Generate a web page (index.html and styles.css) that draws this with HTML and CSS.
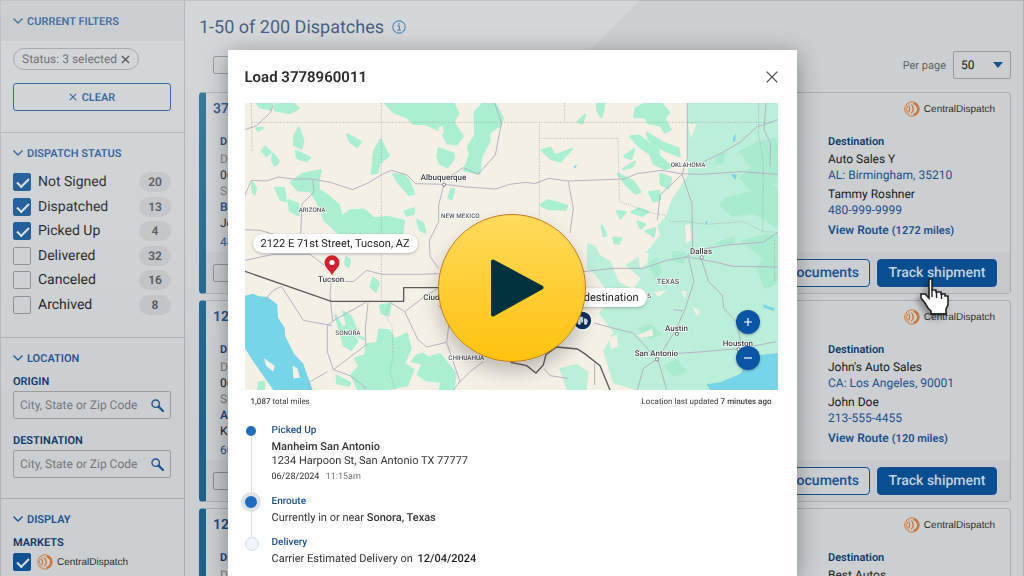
FILE: index.html
```
<!DOCTYPE html>
<html lang="en">
<head>
    <meta charset="utf-8">
    <title>Dispatches</title>
    <meta name="viewport" content="width=device-width, initial-scale=1.0">
    <link rel="stylesheet" href="styles.css">
</head>
<body>
    <svg class="defs" width="0" height="0" aria-hidden="true">
        <symbol id="chevron" viewBox="0 0 10 6"><path d="M0.5 0.6 5 5 9.5 0.6" fill="none" stroke="currentColor" stroke-width="1.4"/></symbol>
        <symbol id="cross" viewBox="0 0 10 10"><path d="M1 1 9 9M9 1 1 9" fill="none" stroke="currentColor" stroke-width="1.5"/></symbol>
        <symbol id="search" viewBox="0 0 13 13"><circle cx="4.7" cy="4.7" r="3.7" fill="none" stroke="currentColor" stroke-width="1.4"/><path d="M7.6 7.6 12 12" stroke="currentColor" stroke-width="2.2" stroke-linecap="round"/></symbol>
        <symbol id="cd-logo" viewBox="0 0 16 16">
            <g fill="none" stroke="#cd7230">
                <circle cx="8" cy="8" r="7.2" stroke-width="0.9"/>
                <path d="M5.6 3A5.6 5.6 0 0 0 5.6 13" stroke-width="0.8"/>
                <path d="M9.5 2.2A6 6 0 0 1 9.5 13.800" stroke-width="2"/>
                <path d="M4.600 5.200Q6.800 8 4.600 10.800" stroke-width="1.2"/>
                <path d="M7.300 3.600Q11.200 8 7.300 12.400" stroke-width="1.3"/>
            </g>
        </symbol>
    </svg>

    <div class="app">
        <aside class="sidebar">
            <h2 class="filter-title top"><svg><use href="#chevron"/></svg>CURRENT FILTERS</h2>
            <section class="section current">
                <button class="chip">Status: 3 selected<svg><use href="#cross"/></svg></button>
                <button class="clear-btn"><svg><use href="#cross"/></svg>CLEAR</button>
            </section>

            <section class="section">
                <h2 class="filter-title"><svg><use href="#chevron"/></svg>DISPATCH STATUS</h2>
                <ul class="status-list">
                    <li><label><input type="checkbox" checked>Not Signed</label><span class="count">20</span></li>
                    <li><label><input type="checkbox" checked>Dispatched</label><span class="count">13</span></li>
                    <li><label><input type="checkbox" checked>Picked Up</label><span class="count">4</span></li>
                    <li><label><input type="checkbox">Delivered</label><span class="count">32</span></li>
                    <li><label><input type="checkbox">Canceled</label><span class="count">16</span></li>
                    <li><label><input type="checkbox">Archived</label><span class="count">8</span></li>
                </ul>
            </section>

            <section class="section location">
                <h2 class="filter-title"><svg><use href="#chevron"/></svg>LOCATION</h2>
                <label class="field-label" for="origin">ORIGIN</label>
                <div class="search-box">
                    <input id="origin" type="text" placeholder="City, State or Zip Code">
                    <svg><use href="#search"/></svg>
                </div>
                <label class="field-label second" for="destination">DESTINATION</label>
                <div class="search-box">
                    <input id="destination" type="text" placeholder="City, State or Zip Code">
                    <svg><use href="#search"/></svg>
                </div>
            </section>

            <section class="section display">
                <h2 class="filter-title"><svg><use href="#chevron"/></svg>DISPLAY</h2>
                <h3 class="field-label">MARKETS</h3>
                <label class="market"><input type="checkbox" checked><span class="brand"><svg><use href="#cd-logo"/></svg>CentralDispatch</span></label>
            </section>
        </aside>

        <main class="main">
            <h1>1-50 of 200 Dispatches
                <svg class="info" viewBox="0 0 14 14"><circle cx="7" cy="7" r="6.2" fill="none" stroke="currentColor" stroke-width="1.2"/><path d="M5.4 6.2H7.4V10M5.2 10.1H9" fill="none" stroke="currentColor" stroke-width="1.2"/><circle cx="7" cy="3.9" r="0.9" fill="currentColor"/></svg>
            </h1>
            <div class="toolbar">
                <input type="checkbox" aria-label="Select all">
                <div class="per-page">
                    <label for="perPage">Per page</label>
                    <span class="select-wrap">
                        <select id="perPage"><option>50</option><option>100</option></select>
                        <svg viewBox="0 0 10 6"><path d="M0 0H10L5 6Z" fill="#17508f"/></svg>
                    </span>
                </div>
            </div>

            <article class="card">
                <div class="card-head">
                    <h2>3778960011</h2>
                    <span class="brand"><svg><use href="#cd-logo"/></svg>CentralDispatch</span>
                </div>
                <div class="card-body">
                    <div class="info-col">
                        <p class="heading">Disp</p>
                        <p class="muted gap-1">Date</p>
                        <p>06/28</p>
                        <p class="muted">Ship</p>
                        <p class="strong">Brok</p>
                        <p>Jo</p>
                        <p class="gap-3"><a href="#">480</a></p>
                    </div>
                    <div class="dest-col">
                        <p class="heading">Destination</p>
                        <p class="gap-1">Auto Sales Y</p>
                        <p><a href="#">AL: Birmingham, 35210</a></p>
                        <p class="gap-3">Tammy Roshner</p>
                        <p><a href="#">480-999-9999</a></p>
                        <p class="gap-4"><a class="route" href="#">View Route <small>(1272 miles)</small></a></p>
                    </div>
                </div>
                <div class="card-foot">
                    <input type="checkbox" aria-label="Select load">
                    <div class="actions">
                        <button class="btn">Documents</button>
                        <button class="btn primary">Track shipment</button>
                        <svg class="cursor" viewBox="0 0 29 39">
                            <path d="M9 2H12V13H16V15H21V17H25V19H28V28L26 32V37H11V34L8 31L5 26L1 21V17H5L9 21Z" fill="#fff" stroke="#222" stroke-width="1.6"/>
                            <path d="M12 13V20M16.500 15V21M21.500 17V22M10 37H27" stroke="#222" stroke-width="1.4"/>
                        </svg>
                    </div>
                </div>
            </article>

            <article class="card">
                <div class="card-head">
                    <h2>1234</h2>
                    <span class="brand"><svg><use href="#cd-logo"/></svg>CentralDispatch</span>
                </div>
                <div class="card-body">
                    <div class="info-col">
                        <p class="heading">Disp</p>
                        <p class="muted gap-1">Date</p>
                        <p>06/28</p>
                        <p class="muted">Ship</p>
                        <p class="strong">Auto</p>
                        <p>Kim</p>
                        <p class="gap-3"><a href="#">602</a></p>
                    </div>
                    <div class="dest-col">
                        <p class="heading">Destination</p>
                        <p class="gap-1">John's Auto Sales</p>
                        <p><a href="#">CA: Los Angeles, 90001</a></p>
                        <p class="gap-3">John Doe</p>
                        <p><a href="#">213-555-4455</a></p>
                        <p class="gap-4"><a class="route" href="#">View Route <small>(120 miles)</small></a></p>
                    </div>
                </div>
                <div class="card-foot">
                    <input type="checkbox" aria-label="Select load">
                    <div class="actions">
                        <button class="btn">Documents</button>
                        <button class="btn primary">Track shipment</button>
                    </div>
                </div>
            </article>

            <article class="card">
                <div class="card-head">
                    <h2>1234</h2>
                    <span class="brand"><svg><use href="#cd-logo"/></svg>CentralDispatch</span>
                </div>
                <div class="card-body">
                    <div class="info-col">
                        <p class="heading">Disp</p>
                        <p class="muted gap-1">Date</p>
                    </div>
                    <div class="dest-col">
                        <p class="heading">Destination</p>
                        <p class="gap-1">Best Autos</p>
                    </div>
                </div>
            </article>
        </main>
    </div>

    <div class="sheen"></div>

    <div class="overlay">
        <div class="modal" role="dialog" aria-labelledby="modalTitle">
            <header class="modal-head">
                <h2 id="modalTitle">Load 3778960011</h2>
                <button class="close-btn" aria-label="Close"><svg viewBox="0 0 12 12"><path d="M.7.7 11.3 11.3M11.3.7.7 11.3" stroke="#444" stroke-width="1.2"/></svg></button>
            </header>

            <div class="map">
                <svg class="map-img" viewBox="15 24 1599 861">
                    <rect x="15" y="24" width="1599" height="861" fill="#f5f0e6"/>

                    <!-- forests, west -->
                    <g class="forest">
                        <path d="M50 24H98L92 44 60 36ZM108 26H160L176 40 150 54 104 46Z"/>
                        <path d="M176 98 190 138 184 160 162 150 164 120ZM168 168 210 188 200 198 172 190ZM100 176 116 200 104 212 96 196ZM76 156 92 172 80 182 66 168ZM50 100 70 98 54 108ZM322 118 362 140 352 156 330 140Z"/>
                        <path d="M422 134 446 182 418 206 412 232 396 236 402 170Z"/>
                        <path d="M435 24H640L655 56 640 80 668 124 650 148 622 144 606 110 560 88 520 86 500 66 462 52Z"/>
                        <path d="M704 52 730 24H764L788 68 782 90 748 112 748 138 722 190 718 236 672 226 690 178 684 156 706 120Z"/>
                        <path d="M596 160 640 176 642 190 622 216 600 206 592 184Z"/>
                        <path d="M460 238 490 240 506 256 522 296 508 300 474 262Z"/>
                        <path d="M152 262 190 236 242 226 236 254 236 284 262 300 296 330 306 366 330 346 372 344 402 370 442 366 492 378 486 418H300L254 376 232 322 212 288 174 286Z"/>
                        <path d="M106 278 132 280 138 318 122 314ZM146 316 174 326 176 360 150 348ZM36 262 48 280 44 298 38 290ZM532 376 550 386 556 412 540 404ZM494 348 522 340 522 356 500 362ZM634 282 642 284 634 312 626 308Z"/>
                        <path d="M400 548 416 564 408 590 392 574ZM318 486 330 494 326 516 316 508ZM420 632 452 626 446 660 426 656Z"/>
                        <path d="M286 660 308 700 320 690 352 740 334 764 312 752ZM310 650 332 664 356 720 372 732 352 722 320 684Z"/>
                        <path d="M334 840 358 812 346 790 376 780 380 748 412 744 418 704 446 706 464 734 500 716 512 760 492 806 520 824 502 870 430 885H356Z"/>
                        <path d="M516 798 548 806 534 838 560 856 604 860 600 885H640L646 836 622 806 600 778 566 788 548 776 530 782Z"/>
                        <path d="M56 864 72 860 72 885H56ZM290 842 330 864 326 872 292 864Z"/>
                    </g>
                    <!-- plains and east -->
                    <g class="forest" transform="translate(795 0)">
                        <path d="M110 166 136 158 150 182 200 162 166 200 138 192ZM276 28 298 24 290 66 278 50ZM218 80 240 60 232 86Z"/>
                        <path d="M392 40 420 26H470L492 52 478 70 496 104 480 112 466 90 430 84 420 66 388 66Z"/>
                        <path d="M376 124 402 122 430 144 458 152 462 182 500 216 480 222 446 206 436 178 400 152ZM426 114 480 146 520 160 524 184 474 164 430 132ZM358 184 388 162 378 192ZM354 222 390 200 380 216Z"/>
                        <path d="M106 330 130 316 186 332 182 344 130 342ZM140 328 166 328 166 334 140 334ZM338 236 384 258 406 290 392 296 360 266ZM432 292 462 288 466 312 446 320ZM466 236 498 250 490 280 468 268ZM336 348 362 352 346 370ZM290 392 304 420 296 424ZM398 380 420 388 406 400ZM422 408 450 400 446 424ZM326 428 348 430 342 446 328 444ZM380 352 400 340 430 350 412 362Z"/>
                    </g>
                    <path fill="#bcefd9" d="M1342 24H1614V885H1188L1118 864 1106 822 1090 768 1120 712 1076 654 1112 616 1166 606 1202 550 1156 510 1220 470 1260 420 1252 392 1276 366 1296 312 1324 270 1344 240Z"/>
                    <path fill="#bcefd9" d="M1042 444 1066 452 1080 480 1112 498 1136 560 1170 578 1154 610 1106 596 1066 540 1040 520ZM958 820 1010 806 1046 830 1040 885H980Z"/>
                    <g class="woods">
                        <path d="M1500 170 1548 144 1614 130V260L1580 272 1614 280V398L1540 352 1478 362 1442 330 1460 310 1542 290 1500 250 1536 216ZM1430 190 1452 176 1446 202 1428 208Z"/>
                        <path d="M1508 440 1560 424 1614 420V560L1576 578 1552 520 1572 490ZM1300 470 1334 476 1330 502 1300 496ZM1430 446 1482 428 1480 446Z"/>
                        <path d="M1230 506 1250 490 1262 530 1246 546ZM1196 700 1230 690 1262 716 1230 728ZM1276 812 1310 796 1336 830 1300 842Z"/>
                    </g>
                    <g fill="#f5f0e6">
                        <path d="M1194 474 1226 474 1222 504 1200 520ZM1336 390 1350 388 1354 436 1338 446ZM1344 86 1370 86 1352 130ZM1324 586 1340 590 1334 612ZM1356 632 1382 650 1370 662ZM1242 592 1280 586 1256 606ZM1108 730 1130 718 1134 756 1112 762ZM1190 722 1236 702 1240 722 1204 728Z"/>
                        <path d="M594 98 608 92 612 112 602 124ZM660 304 678 296 676 320Z"/>
                    </g>

                    <!-- water -->
                    <g fill="#77d5ea">
                        <path d="M15 602 40 596 56 604 82 606 112 628 114 668 134 698 136 724 162 776 190 806 218 885H100L40 800 15 760Z"/>
                        <path d="M1400 868 1440 862 1500 838 1524 802 1560 780 1614 774V885H1410Z"/>
                        <path d="M1480 126 1488 116 1486 136 1478 144ZM1472 236 1490 240 1486 256ZM1394 384 1404 376 1400 388ZM1568 628 1604 640 1602 648 1572 638ZM1000 216 1012 208 1006 220Z"/>
                    </g>
                    <path fill="#f5f0e6" d="M72 790 104 812 100 830 78 812ZM158 812 172 820 180 848 160 850ZM15 808 50 860 42 885H15Z"/>

                    <!-- roads -->
                    <g fill="none" stroke="#b4b4c4" stroke-width="3" stroke-linejoin="round">
                        <path d="M15 300 34 256 80 258 114 246 160 252 216 252 270 262 338 284 384 264 430 236 454 226 502 240 526 266 612 268 680 276 768 282 808 268 858 262 884 266 926 250 982 258 1152 252 1190 236 1266 226 1322 236 1380 238 1504 230 1614 238"/>
                        <path d="M218 254 222 292 186 326 182 418M15 404 60 406 130 426M15 104 50 92 92 52 100 30M764 24 784 84 766 180 714 238 670 218 618 252M612 268 596 330 596 380 568 436 570 484 596 520M596 536 536 538 426 538 380 526 340 560 290 558M15 496 100 478 210 478 252 510"/>
                        <path d="M985 260 1000 340 990 414M1342 24 1342 190 1326 238 1260 300 1252 376M1326 238 1356 326 1358 470 1332 490M1380 206 1444 174 1500 142 1550 96 1614 74M1578 24 1572 104 1592 144 1590 216M1010 532 1120 520 1210 520 1280 496 1344 486 1420 500 1478 514 1614 516M1346 482 1380 464 1460 450 1568 442 1614 412"/>
                        <path d="M1384 492 1406 560 1446 600 1452 640 1490 682 1504 750M1346 490 1362 560 1336 640 1310 700 1254 790 1210 820 1192 885M1254 794 1280 885M1062 684 1130 702 1180 714 1240 780 1390 770 1504 760 1610 740M1300 644 1330 648"/>
                        <path d="M274 550 270 600 278 680 262 692 262 770 280 824 330 842 380 880M280 824 378 750 376 700 384 624M276 680 310 660 378 622M276 692 190 676 124 574 100 586 70 620M450 622 494 650 534 734 560 756 620 742 660 860 690 830 730 800M494 650 560 600 596 580M620 742 628 680 596 630M660 860 640 885M262 830 200 866M912 820 930 842 984 850"/>
                    </g>
                    <g fill="none" stroke="#9b9b98" stroke-width="2" stroke-dasharray="3 4">
                        <path d="M34 24 36 168M36 82H1600M424 24V618M974 24V82M898 86V372M904 130H1134L1138 320M1556 24V120L1570 200 1568 410 1614 412"/>
                        <path d="M1138 320 1180 334 1224 352 1272 360 1290 380 1330 378 1400 388 1510 380 1568 408M450 622 436 660 456 694 460 780 450 830 466 885M1604 435V560"/>
                    </g>
                    <path fill="none" stroke="#5c5a5a" stroke-width="4" d="M15 529 274 619H491V578H596M812 802 860 812 888 834 910 810 918 778 950 756 1012 762 1034 776 1080 812 1110 885"/>
                    <path fill="none" stroke="#b0b0b0" stroke-width="3" d="M1064 805V870"/>

                    <g class="city-dots">
                        <circle cx="612" cy="269" r="5"/>
                        <circle cx="1385" cy="487" r="5"/>
                        <circle cx="1311" cy="717" r="5"/>
                        <circle cx="1251" cy="793" r="5"/>
                        <circle cx="1496" cy="763" r="5"/>
                    </g>
                    <g class="cities">
                        <text x="542" y="256">Albuquerque</text>
                        <text x="234" y="562">Tucson</text>
                        <text x="550" y="615">Ciudad</text>
                        <text x="1350" y="476">Dallas</text>
                        <text x="1275" y="707">Austin</text>
                        <text x="1184" y="783">San Antonio</text>
                        <text x="1448" y="752">Houston</text>
                    </g>
                    <g class="states">
                        <text x="176" y="350">ARIZONA</text>
                        <text x="603" y="369">NEW MEXICO</text>
                        <text x="1292" y="217">OKLAHOMA</text>
                        <text class="big" x="1250" y="568">TEXAS</text>
                        <text x="286" y="721">SONORA</text>
                        <text x="625" y="794">CHIHUAHUA</text>
                        <text x="1222" y="610">S</text>
                    </g>
                </svg>

                <svg class="pin" viewBox="0 0 16 21"><path d="M8 20.5C6.5 16 .5 13 .5 7.6a7.5 7.3 0 0 1 15 0C15.5 13 9.5 16 8 20.5Z" fill="#d2202f"/><circle cx="8" cy="7.5" r="2.6" fill="#fff"/></svg>
                <div class="bubble from">2122 E 71st Street, Tucson, AZ</div>
                <div class="bubble to">to destination</div>
                <svg class="truck" viewBox="0 0 20 20"><circle cx="10" cy="10" r="9" fill="#0d3263" stroke="#fff" stroke-width="1.5"/><path d="M5 6.5H10.500V12H5ZM11.300 8H13.500L15 10V12H11.300Z" fill="#cfe3f5"/><circle cx="7" cy="12.800" r="1.300" fill="#fff"/><circle cx="13" cy="12.800" r="1.300" fill="#fff"/></svg>
                <div class="zoom">
                    <button aria-label="Zoom in"><svg viewBox="0 0 10 10"><path d="M5 1V9M1 5H9" stroke="#fff" stroke-width="1.2"/></svg></button>
                    <button aria-label="Zoom out"><svg viewBox="0 0 10 10"><path d="M1 5H9" stroke="#fff" stroke-width="1.2"/></svg></button>
                </div>
            </div>

            <div class="map-meta">
                <span><b>1,087</b> total miles</span>
                <span>Location last updated <b>7 minutes ago</b></span>
            </div>

            <ol class="timeline">
                <li class="picked">
                    <h3>Picked Up</h3>
                    <p class="place">Manheim San Antonio</p>
                    <p class="address">1234 Harpoon St, San Antonio TX 77777</p>
                    <p class="when">06/28/2024 <span>11:15am</span></p>
                </li>
                <li class="enroute">
                    <h3>Enroute</h3>
                    <p>Currently in or near <b>Sonora, Texas</b></p>
                </li>
                <li class="delivery">
                    <h3>Delivery</h3>
                    <p>Carrier Estimated Delivery on <b class="date">12/04/2024</b></p>
                </li>
            </ol>
        </div>
    </div>

    <button class="play" aria-label="Play video">
        <svg viewBox="0 0 54 58"><path d="M3 2.5 51.5 28.5 3 55.5Z" fill="#03323f" stroke="#03323f" stroke-width="4" stroke-linejoin="round"/></svg>
    </button>
</body>
</html>
```
FILE: styles.css
```
* { box-sizing: border-box; }

body {
    margin: 0;
    background: #cbcfd1;
    color: #16191b;
    font-family: Roboto, "Liberation Sans", sans-serif;
    font-size: 12px;
    text-rendering: geometricPrecision;
    overflow: hidden;
}

h1, h2, h3, p, ul, ol { margin: 0; padding: 0; }
ul, ol { list-style: none; }
a { color: #1c4f8c; text-decoration: none; }
button, input, select { font-family: inherit; text-rendering: inherit; }
button { cursor: pointer; }

.defs { position: absolute; }

.app {
    display: flex;
    height: 100vh;
    border: 1px solid #b2b6b8;
    border-bottom: 0;
    overflow: hidden;
}

input[type="checkbox"] {
    appearance: none;
    flex: none;
    width: 18px;
    height: 18px;
    margin: 0;
    border: 1px solid #888c8f;
    border-radius: 2px;
}

input[type="checkbox"]:checked {
    border-color: #0f5192;
    background: #0f5192;
}

input[type="checkbox"]:checked::before {
    content: "";
    display: block;
    width: 10px;
    height: 5px;
    margin: 4px 0 0 3px;
    border: solid #d5dde3;
    border-width: 0 0 2px 2px;
    transform: rotate(-45deg);
}

/* sidebar */
.sidebar {
    flex: none;
    width: 184px;
    border-right: 1px solid #a9adaf;
}

.filter-title {
    display: flex;
    align-items: center;
    gap: 4px;
    height: 18px;
    color: #1d5391;
    font-size: 11px;
    font-weight: 600;
}

.filter-title svg {
    width: 10px;
    height: 6px;
}

.filter-title.top {
    height: 40px;
    padding-left: 12px;
    background: #c1c5c7;
}

.section {
    padding: 11px 13px 20px 12px;
    border-bottom: 1px solid #a9adaf;
}

.section.current { padding: 7px 13px 21px 12px; }
.section.display { border-bottom: 0; }

.chip {
    display: flex;
    align-items: center;
    gap: 4px;
    height: 22px;
    padding: 0 8px;
    background: none;
    border: 1px solid #989c9f;
    border-radius: 11px;
    color: #54585b;
    font-size: 12px;
}

.chip svg { width: 9px; height: 9px; color: #3b3f42; }

.clear-btn {
    display: flex;
    align-items: center;
    justify-content: center;
    gap: 5px;
    width: 100%;
    height: 28px;
    margin-top: 13px;
    background: none;
    border: 1px solid #1d5391;
    border-radius: 3px;
    color: #1d5391;
    font-size: 11px;
    font-weight: 600;
}

.clear-btn svg { width: 8px; height: 8px; }

.status-list {
    display: flex;
    flex-direction: column;
    justify-content: space-between;
    height: 143px;
    margin-top: 10px;
    margin-bottom: 2px;
}

.status-list li {
    display: flex;
    align-items: center;
    justify-content: space-between;
    height: 20px;
}

.status-list label {
    display: flex;
    align-items: center;
    gap: 7px;
    font-size: 14px;
}

.count {
    width: 32px;
    border-radius: 10px;
    background: #bec2c4;
    color: #4c5053;
    font-size: 12px;
    font-weight: 600;
    line-height: 20px;
    text-align: center;
}

.field-label {
    display: block;
    margin-top: 7px;
    color: #0f3869;
    font-size: 11px;
    font-weight: 600;
    line-height: 16px;
}

.field-label.second { margin-top: 14px; }

.search-box {
    display: flex;
    align-items: center;
    height: 28px;
    margin-top: 1px;
    padding: 0 6px;
    border: 1px solid #9a9ea1;
    border-radius: 2px;
}

.search-box input {
    flex: 1;
    min-width: 0;
    padding: 0;
    border: 0;
    outline: 0;
    background: none;
    font-size: 12px;
}

.search-box input::placeholder { color: #73777a; }
.search-box svg { width: 13px; height: 13px; color: #1d5391; }

.market {
    display: flex;
    align-items: center;
    gap: 6px;
    margin-top: 2px;
}

.brand {
    display: flex;
    align-items: center;
    gap: 4px;
    color: #2b2e30;
    font-family: "Liberation Sans", Arial, sans-serif;
    font-size: 10px;
}

.brand svg { width: 16px; height: 16px; }

/* list of dispatches */
.main {
    flex: 1;
    min-width: 0;
    padding: 0 12px 0 14px;
}

h1 {
    display: flex;
    align-items: center;
    gap: 8px;
    height: 50px;
    padding-top: 2px;
    color: #1f3f6b;
    font-size: 18px;
    font-weight: 400;
}

h1 .info { width: 14px; height: 14px; color: #2f7ab0; }

.toolbar {
    display: flex;
    align-items: center;
    justify-content: space-between;
    height: 28px;
    margin-bottom: 13px;
    padding-left: 14px;
}

.per-page {
    display: flex;
    align-items: center;
    gap: 7px;
    color: #5f6366;
    font-size: 11px;
}

.select-wrap {
    display: grid;
    align-items: center;
}

.select-wrap select,
.select-wrap svg { grid-area: 1 / 1; }

.select-wrap select {
    appearance: none;
    width: 58px;
    height: 28px;
    padding: 0 7px;
    background: none;
    border: 1px solid #989c9f;
    border-radius: 2px;
    color: #16191b;
    font-size: 12px;
}

.select-wrap svg {
    justify-self: end;
    width: 10px;
    height: 6px;
    margin-right: 8px;
    pointer-events: none;
}

.card {
    min-height: 202px;
    margin-bottom: 6px;
    border: 1px solid #a9adaf;
    border-left: 7px solid #1c628a;
    border-radius: 4px;
}

.card-head {
    display: flex;
    align-items: center;
    justify-content: space-between;
    height: 32px;
    padding: 0 15px 0 7px;
}

.card-head h2 {
    color: #1a4a85;
    font-size: 14px;
    font-weight: 600;
}

.card-body {
    display: flex;
    justify-content: space-between;
    min-height: 127px;
    padding: 9px 14px 0 14px;
    line-height: 16px;
}

.dest-col { width: 168px; }
.card-body .heading { color: #0f3869; font-size: 11px; font-weight: 600; }
.card-body .muted { color: #777b7e; }
.card-body .strong { color: #1a4a85; font-weight: 600; }
.gap-1 { margin-top: 1px; }
.gap-3 { margin-top: 3px; }
.gap-4 { margin-top: 4px; }
.route { font-weight: 600; }
.route small { font-size: 11px; }

.card-foot {
    display: flex;
    align-items: center;
    justify-content: space-between;
    height: 41px;
    padding: 0 13px 0 7px;
    background: #c5c9cb;
}

.actions {
    display: flex;
    gap: 7px;
    position: relative;
}

.btn {
    height: 28px;
    padding: 0 10px;
    background: #cbcfd1;
    border: 1px solid #17508f;
    border-radius: 4px;
    color: #17508f;
    font-size: 14px;
    font-weight: 500;
}

.btn.primary {
    width: 120px;
    padding: 0;
    background: #084e91;
    color: #c5d3df;
}

.cursor {
    position: absolute;
    top: 18px;
    right: 48px;
    z-index: 1;
    width: 29px;
    height: 39px;
    filter: drop-shadow(-3px 3px 3px rgba(0,0,0,0.35));
}

/* light falling across the upper left of the screen */
.sheen {
    position: fixed;
    inset: 0;
    background: linear-gradient(135deg, rgba(255,255,255,0.18) 452px, transparent 453px);
    mask-image: linear-gradient(to bottom, #000, transparent 75%);
    pointer-events: none;
}

/* modal */
.overlay {
    position: fixed;
    inset: 0;
    display: flex;
    justify-content: center;
    padding-top: 50px;
}

.modal {
    width: 569px;
    padding: 0 19px 0 17px;
    background: #fff;
    box-shadow: 0 4px 22px rgba(0,0,0,0.35);
}

.modal-head {
    display: flex;
    align-items: center;
    justify-content: space-between;
    height: 53px;
}

.modal-head h2 {
    color: #2a2a2a;
    font-size: 15px;
    font-weight: 600;
}

.close-btn {
    display: flex;
    padding: 0;
    background: none;
    border: 0;
}

.close-btn svg { width: 12px; height: 12px; }

.map { position: relative; }
.map-img { display: block; width: 100%; }

.forest { fill: #a9efd0; stroke: #a9efd0; }
.woods { fill: #a9ebcf; stroke: #a9ebcf; }
.forest, .woods { stroke-width: 7px; stroke-linejoin: round; }

.cities text, .states text {
    fill: #3e4144;
    stroke: #fff;
    stroke-width: 4px;
    paint-order: stroke;
    font-weight: 500;
}

.cities text { font-size: 24px; }
.states text { font-size: 19px; fill: #55585b; }
.states .big { font-size: 22px; }
.city-dots { fill: #fff; stroke: #55585b; stroke-width: 2px; }

.bubble {
    position: absolute;
    height: 19px;
    padding: 0 8px;
    border-radius: 10px;
    background: #fff;
    box-shadow: 0 1px 3px rgba(0,0,0,0.25);
    color: #222;
    font-size: 11px;
    line-height: 19px;
}

.bubble.from { left: 8px; top: 131px; }
.bubble.to { right: 131px; top: 185px; }

.pin {
    position: absolute;
    left: 79px;
    top: 152px;
    width: 16px;
    height: 21px;
}

.truck {
    position: absolute;
    left: 327px;
    top: 207px;
    width: 21px;
    height: 21px;
}

.zoom {
    position: absolute;
    right: 18px;
    bottom: 20px;
    display: flex;
    flex-direction: column;
    gap: 12px;
}

.zoom button {
    display: flex;
    align-items: center;
    justify-content: center;
    width: 24px;
    height: 24px;
    padding: 0;
    border: 0;
    border-radius: 50%;
    background: #0a55a5;
    box-shadow: 0 1px 3px rgba(0,0,0,0.3);
}

.zoom svg { width: 10px; height: 10px; }

.map-meta {
    display: flex;
    justify-content: space-between;
    padding: 7px 6px 0;
    color: #3d3d3d;
    font-size: 8px;
    line-height: 10px;
}

.map-meta b { font-weight: 500; }

.timeline {
    padding-top: 18px;
    color: #333;
    font-size: 11px;
    line-height: 14px;
}

.timeline li {
    position: relative;
    padding-left: 27px;
}

.timeline h3 {
    color: #17508f;
    font-size: 10px;
    font-weight: 500;
    line-height: 12px;
}

.timeline b, .timeline .place { font-weight: 500; }

.timeline li::before {
    content: "";
    position: absolute;
    z-index: 1;
    left: 1px;
    top: 1px;
    width: 10px;
    height: 10px;
    border-radius: 50%;
    background: #1f6dc0;
}

.timeline li:not(:last-child)::after {
    content: "";
    position: absolute;
    left: 6px;
    top: 6px;
    width: 1px;
    height: 100%;
    background: #dcdfe3;
}

.picked { height: 71px; }
.picked .place { margin-top: 3px; }
.timeline .when { margin-top: 2px; font-size: 9px; }
.when span { margin-left: 4px; color: #777; }

.enroute { height: 41px; }
.enroute p, .delivery p { margin-top: 3px; }

.timeline .enroute::before {
    left: 0;
    top: 0;
    width: 12px;
    height: 12px;
    box-shadow: 0 0 0 4px #dfe3e7;
}

.timeline .delivery::before {
    left: 0;
    top: 0;
    width: 12px;
    height: 12px;
    border: 1px solid #cfdce9;
    background: #f0f6fc;
}

.date { margin-left: 2px; color: #222; }

/* video play button */
.play {
    position: fixed;
    inset: 0;
    display: flex;
    align-items: center;
    justify-content: center;
    width: 148px;
    height: 148px;
    margin: auto;
    padding: 0 0 0 10px;
    border: 1px solid #c07a1c;
    border-radius: 50%;
    background: linear-gradient(#ffdb5c, #ffc20e);
    box-shadow: 0 10px 18px rgba(0,0,0,0.22);
}

.play svg { width: 54px; height: 58px; }
```
